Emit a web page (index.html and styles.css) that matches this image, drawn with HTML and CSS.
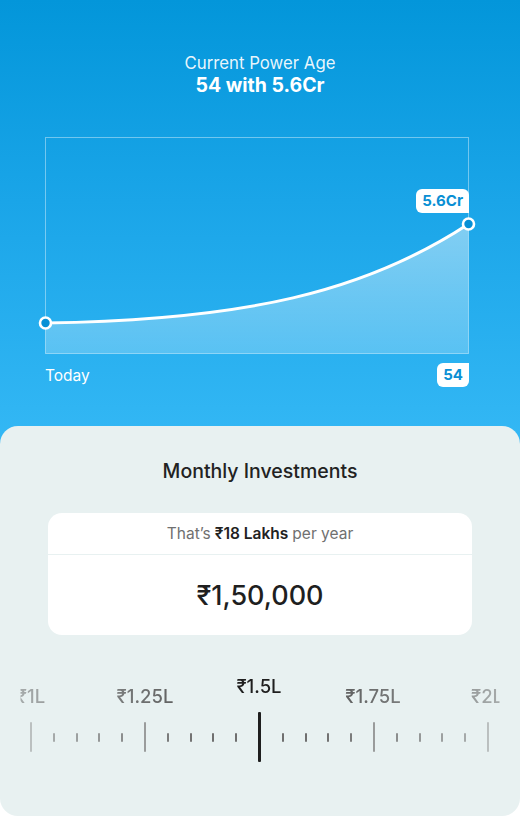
FILE: index.html
```html
<!DOCTYPE html>
<html>
<head>
<meta charset="utf-8">
<link rel="stylesheet" href="styles.css">
</head>
<body>
<div class="page">
  <section class="hero">
    <div class="hero-title">Current Power Age</div>
    <div class="hero-value">54 with 5.6Cr</div>
    <div class="chart">
      <svg class="chart-svg" width="424" height="217" viewBox="0 0 424 217">
        <defs>
          <linearGradient id="fillg" x1="0" y1="0" x2="0" y2="1">
            <stop offset="0" stop-color="#ffffff" stop-opacity="0.45"/>
            <stop offset="1" stop-color="#ffffff" stop-opacity="0.22"/>
          </linearGradient>
        </defs>
        <rect x="0.5" y="0.5" width="423" height="216" fill="none" stroke="rgba(255,255,255,0.4)" stroke-width="1"/>
        <path d="M0.5,186 C200,183 320,155 423.5,87 L423.5,216.5 L0.5,216.5 Z" fill="url(#fillg)"/>
        <path d="M0.5,186 C200,183 320,155 423.5,87" fill="none" stroke="#ffffff" stroke-width="3" stroke-linecap="round"/>
        <circle cx="0.5" cy="186" r="5.5" fill="#0690d6" stroke="#ffffff" stroke-width="2.6"/>
        <circle cx="423.5" cy="87" r="5.5" fill="#0690d6" stroke="#ffffff" stroke-width="2.6"/>
      </svg>
      <div class="badge badge-top">5.6Cr</div>
    </div>
    <div class="chart-foot">
      <span class="today">Today</span>
      <span class="badge badge-age">54</span>
    </div>
  </section>
  <section class="panel">
    <h2 class="panel-title">Monthly Investments</h2>
    <div class="amount-card">
      <div class="amount-note">That’s <b>₹18 Lakhs</b> per year</div>
      <div class="amount-value">₹1,50,000</div>
    </div>
    <div class="ruler">
      <div class="ruler-labels">
        <span class="rl">₹1L</span>
        <span class="rl">₹1.25L</span>
        <span class="rl rl-active">₹1.5L</span>
        <span class="rl">₹1.75L</span>
        <span class="rl">₹2L</span>
      </div>
      <div class="ticks">
        <i class="t major"></i><i class="t"></i><i class="t"></i><i class="t"></i><i class="t"></i>
        <i class="t major"></i><i class="t"></i><i class="t"></i><i class="t"></i><i class="t"></i>
        <i class="t center"></i><i class="t"></i><i class="t"></i><i class="t"></i><i class="t"></i>
        <i class="t major"></i><i class="t"></i><i class="t"></i><i class="t"></i><i class="t"></i>
        <i class="t major"></i>
      </div>
    </div>
  </section>
</div>
</body>
</html>
```

FILE: styles.css
```css
* { box-sizing: border-box; }
html, body {
  margin: 0;
  padding: 0;
  background: #ffffff;
}
body {
  font-family: Inter, "Noto Sans", "DejaVu Sans", sans-serif;
  width: 520px;
  height: 816px;
  overflow: hidden;
}
.page {
  width: 520px;
  height: 816px;
  display: flex;
  flex-direction: column;
}
.hero {
  height: 446px;
  flex: none;
  padding-top: 52px;
  background: linear-gradient(180deg, #0396da 0%, #1aa5e8 45%, #34b8f5 100%);
  color: #fff;
  display: flex;
  flex-direction: column;
  align-items: center;
}
.hero-title {
  font-size: 16.8px;
  line-height: 20px;
  font-weight: 400;
  color: rgba(255,255,255,0.92);
  margin-top: 1px;
}
.hero-value {
  font-size: 19.5px;
  line-height: 24px;
  font-weight: 700;
}
.chart {
  position: relative;
  align-self: flex-start;
  margin-left: 45px;
  margin-top: 40px;
  width: 424px;
  height: 217px;
}
.chart-svg {
  display: block;
  overflow: visible;
}
.badge {
  background: #fff;
  color: #0a8fd4;
  font-weight: 700;
  font-size: 15px;
  line-height: 24px;
  padding: 0 6px;
}
.badge-top {
  position: absolute;
  right: 0;
  top: 52px;
  border-radius: 6px 6px 0 6px;
}
.chart-foot {
  align-self: stretch;
  margin: 9px 51px 0 45px;
  display: flex;
  justify-content: space-between;
  align-items: center;
  height: 24px;
}
.today {
  font-size: 15.5px;
  color: #fff;
}
.badge-age {
  border-radius: 6px 0 6px 6px;
}
.panel {
  flex: 1;
  margin-top: -20px;
  background: #e8f1f1;
  border-radius: 18px;
  padding-top: 33px;
  display: flex;
  flex-direction: column;
  align-items: center;
  position: relative;
  height: 390px;
}
.panel-title {
  margin: 0;
  font-size: 19.5px;
  line-height: 24px;
  font-weight: 500;
  color: #222;
}
.amount-card {
  margin-top: 30px;
  width: 424px;
  background: #fff;
  border-radius: 14px;
  display: flex;
  flex-direction: column;
}
.amount-note {
  height: 42px;
  display: flex;
  align-items: center;
  justify-content: center;
  font-size: 15.5px;
  color: #707070;
  border-bottom: 1.5px solid #e8f1f1;
  gap: 4px;
}
.amount-note b {
  color: #222;
  font-weight: 600;
}
.amount-value {
  height: 80px;
  display: flex;
  align-items: center;
  justify-content: center;
  font-size: 27px;
  font-weight: 500;
  color: #1f1f1f;
}
.ruler {
  align-self: stretch;
  margin-top: 41px;
  position: relative;
  -webkit-mask-image: linear-gradient(90deg, transparent 20px, rgba(0,0,0,0.45) 21px, #000 200px, #000 320px, rgba(0,0,0,0.45) 499px, transparent 500px);
  mask-image: linear-gradient(90deg, transparent 20px, rgba(0,0,0,0.45) 21px, #000 200px, #000 320px, rgba(0,0,0,0.45) 499px, transparent 500px);
}
.ruler-labels {
  margin-left: -26px;
  width: 570px;
  display: grid;
  grid-template-columns: repeat(5, 114px);
  align-items: end;
  height: 30px;
}
.rl {
  text-align: center;
  font-size: 18.5px;
  line-height: 20px;
  color: #555;
  font-weight: 500;
}
.rl-active {
  color: #1f1f1f;
  align-self: start;
}
.ticks {
  margin-left: 30px;
  width: 459px;
  height: 50px;
  margin-top: 6px;
  display: flex;
  justify-content: space-between;
  align-items: center;
}
.t {
  display: block;
  width: 2px;
  height: 9px;
  background: #6f6f6f;
  border-radius: 1px;
}
.t.major {
  height: 30px;
  background: #8a8a8a;
}
.t.center {
  width: 3px;
  height: 50px;
  background: #1f1f1f;
}
```
